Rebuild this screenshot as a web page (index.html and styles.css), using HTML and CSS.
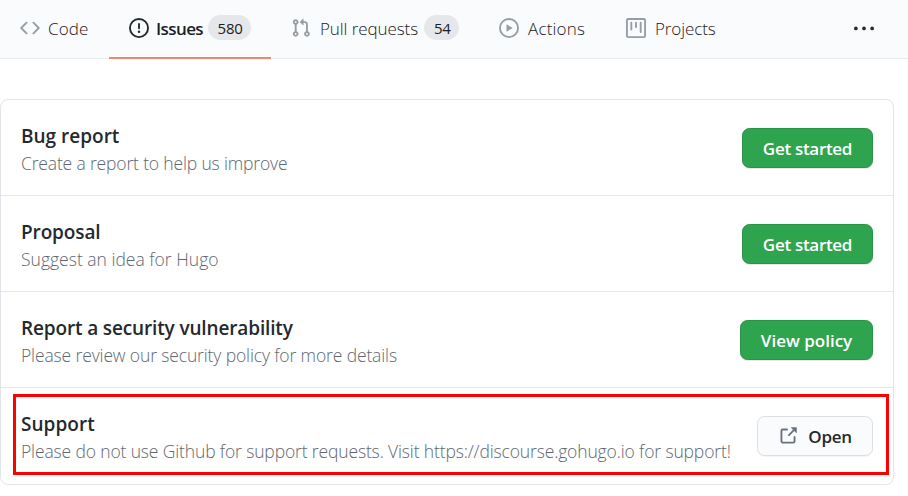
FILE: index.html
```html
<!DOCTYPE html>
<html lang="en">
<head>
<meta charset="utf-8">
<title>Issues</title>
<link rel="stylesheet" href="styles.css">
</head>
<body>
<nav class="tabs">
  <a class="tab tab-code">
    <svg class="icon" viewBox="0 0 16 16"><path fill-rule="evenodd" d="M4.72 3.22a.75.75 0 011.06 1.06L2.06 8l3.72 3.72a.75.75 0 11-1.06 1.06L.47 8.53a.75.75 0 010-1.06l4.25-4.25zm6.56 0a.75.75 0 10-1.06 1.06L13.94 8l-3.72 3.72a.75.75 0 101.06 1.06l4.25-4.25a.75.75 0 000-1.06l-4.25-4.25z"/></svg>
    <span class="label label-code">Code</span>
  </a>
  <a class="tab tab-issues selected">
    <svg class="icon" viewBox="0 0 16 16"><path fill-rule="evenodd" d="M8 1.5a6.5 6.5 0 100 13 6.5 6.5 0 000-13zM0 8a8 8 0 1116 0A8 8 0 010 8zm9 3a1 1 0 11-2 0 1 1 0 012 0zm-.25-6.25a.75.75 0 00-1.5 0v3.5a.75.75 0 001.5 0v-3.5z"/></svg>
    <span class="label label-issues">Issues</span><span class="counter">580</span>
  </a>
  <a class="tab tab-pulls">
    <svg class="icon" viewBox="0 0 16 16"><path fill-rule="evenodd" d="M7.177 3.073L9.573.677A.25.25 0 0110 .854v4.792a.25.25 0 01-.427.177L7.177 3.427a.25.25 0 010-.354zM3.75 2.5a.75.75 0 100 1.5.75.75 0 000-1.5zm-2.25.75a2.25 2.25 0 113 2.122v5.256a2.251 2.251 0 11-1.5 0V5.372A2.25 2.25 0 011.5 3.25zM11 2.5h-1V4h1a1 1 0 011 1v5.628a2.251 2.251 0 101.5 0V5A2.5 2.5 0 0011 2.5zm1 10.25a.75.75 0 111.5 0 .75.75 0 01-1.5 0zM3.75 12a.75.75 0 100 1.5.75.75 0 000-1.5z"/></svg>
    <span class="label label-pulls">Pull requests</span><span class="counter">54</span>
  </a>
  <a class="tab tab-actions">
    <svg class="icon" viewBox="0 0 16 16"><path fill-rule="evenodd" d="M1.5 8a6.5 6.5 0 1113 0 6.5 6.5 0 01-13 0zM8 0a8 8 0 100 16A8 8 0 008 0zM6.379 5.227A.25.25 0 006 5.442v5.117a.25.25 0 00.379.214l4.264-2.559a.25.25 0 000-.428L6.379 5.227z"/></svg>
    <span class="label label-actions">Actions</span>
  </a>
  <a class="tab tab-projects">
    <svg class="icon" viewBox="0 0 16 16"><path fill-rule="evenodd" d="M1.75 0A1.75 1.75 0 000 1.75v12.5C0 15.216.784 16 1.75 16h12.5A1.75 1.75 0 0016 14.25V1.75A1.75 1.75 0 0014.25 0H1.75zM1.5 1.75a.25.25 0 01.25-.25h12.5a.25.25 0 01.25.25v12.5a.25.25 0 01-.25.25H1.75a.25.25 0 01-.25-.25V1.75zM11.75 3a.75.75 0 00-.75.75v7.5a.75.75 0 001.5 0v-7.5a.75.75 0 00-.75-.75zm-8.25.75a.75.75 0 011.5 0v5.5a.75.75 0 01-1.5 0v-5.5zM8 3a.75.75 0 00-.75.75v3.5a.75.75 0 001.5 0v-3.5A.75.75 0 008 3z"/></svg>
    <span class="label label-projects">Projects</span>
  </a>
  <a class="more">
    <svg class="icon" viewBox="0 0 16 16"><path d="M8 9a1.5 1.5 0 100-3 1.5 1.5 0 000 3zM1.5 9a1.5 1.5 0 100-3 1.5 1.5 0 000 3zm13 0a1.5 1.5 0 100-3 1.5 1.5 0 000 3z"/></svg>
  </a>
</nav>
<main class="card">
  <section class="row">
    <div class="text"><h3 class="title t-bug">Bug report</h3><p class="desc d-bug">Create a report to help us improve</p></div>
    <a class="btn primary"><span class="btn-label">Get started</span></a>
  </section>
  <section class="row">
    <div class="text"><h3 class="title t-proposal">Proposal</h3><p class="desc d-proposal">Suggest an idea for Hugo</p></div>
    <a class="btn primary"><span class="btn-label">Get started</span></a>
  </section>
  <section class="row">
    <div class="text"><h3 class="title t-security">Report a security vulnerability</h3><p class="desc d-security">Please review our security policy for more details</p></div>
    <a class="btn primary policy"><span class="btn-label">View policy</span></a>
  </section>
  <section class="row support">
    <div class="text"><h3 class="title t-support">Support</h3><p class="desc d-support">Please do not use Github for support requests. Visit https://discourse.gohugo.io for support!</p></div>
    <a class="btn open"><svg class="icon" viewBox="0 0 16 16"><path fill-rule="evenodd" d="M10.604 1h4.146a.25.25 0 01.25.25v4.146a.25.25 0 01-.427.177L13.03 4.03 9.28 7.78a.75.75 0 01-1.06-1.06l3.75-3.75-1.543-1.543A.25.25 0 0110.604 1zM3.75 2A1.75 1.75 0 002 3.75v8.5c0 .966.784 1.75 1.75 1.75h8.5A1.75 1.75 0 0014 12.25v-3.5a.75.75 0 00-1.5 0v3.5a.25.25 0 01-.25.25h-8.5a.25.25 0 01-.25-.25v-8.5a.25.25 0 01.25-.25h3.5a.75.75 0 000-1.5h-3.5z"/></svg><span class="btn-label">Open</span></a>
    <div class="highlight"></div>
  </section>
</main>
</body>
</html>
```

FILE: styles.css
```css
* { box-sizing: border-box; }
body {
  margin: 0;
  background: #fff;
  color: #24292e;
  font: 17px/26px "Open Sans", "Noto Sans", sans-serif;
  letter-spacing: -0.4px;
  white-space: nowrap;
  overflow: hidden;
}
.icon { width: 20px; height: 20px; flex: none; fill: #959da5; }
.tabs {
  display: flex;
  height: 59px;
  background: #fafbfc;
  border-bottom: 1px solid #e9ebee;
}
.tab {
  display: flex;
  align-items: center;
  height: 59px;
  padding: 0 20px 2px;
  border-bottom: 2px solid transparent;
  color: #1b2025;
  font-weight: 350;
}
.tab .icon { margin-right: 8px; }
.label { padding-top: 2px; }
.label-code { letter-spacing: 0.1px; }
.label-issues { letter-spacing: -0.6px; }
.label-pulls { margin-left: 1px; letter-spacing: -0.08px; }
.label-actions { margin-left: 1px; letter-spacing: 0.2px; }
.label-projects { margin-left: 1px; letter-spacing: -0.1px; }
.tab-code { width: 109px; }
.tab-issues { width: 162px; }
.tab-pulls { width: 208px; }
.tab-actions { width: 127px; }
.tab-projects { width: 130px; }
.selected { border-color: #f9826c; font-weight: 600; }
.selected .icon { margin-right: 7px; fill: #24292e; }
.counter {
  height: 25px;
  margin-left: auto;
  padding: 0 8.5px 0 9.5px;
  border-radius: 13px;
  background: #e6e7eb;
  font-size: 15px;
  font-weight: 500;
  line-height: 26px;
  letter-spacing: -0.3px;
}
.selected .counter { width: 43px; letter-spacing: -0.2px; }
.more { display: flex; align-items: center; margin-left: auto; padding: 0 34px 1px 0; }
.more .icon { fill: #24292e; }
.card {
  width: 894px;
  height: 386px;
  margin-top: 40px;
  border: 1px solid #e1e4e8;
  border-radius: 8px;
}
.row {
  display: flex;
  justify-content: space-between;
  align-items: center;
  height: 96px;
  padding: 0 20px;
  border-bottom: 1px solid #e5e8eb;
}
.text { padding-top: 3px; }
.title { margin: 0; font-size: 19px; font-weight: 600; line-height: 27px; }
.t-bug { letter-spacing: 0; }
.t-proposal { letter-spacing: -0.12px; }
.t-security { letter-spacing: -0.14px; }
.t-support { letter-spacing: 0.05px; }
.desc { margin: 0; color: #5e6771; font-size: 17.5px; font-weight: 350; }
.d-bug { letter-spacing: -0.16px; }
.d-proposal { letter-spacing: 0.01px; }
.d-security { letter-spacing: -0.13px; }
.d-support { letter-spacing: -0.14px; }
.btn {
  display: flex;
  align-items: center;
  justify-content: center;
  width: 131px;
  height: 40px;
  flex: none;
  border: 1px solid #2b9348;
  border-radius: 7.5px;
  font-weight: 600;
  letter-spacing: -0.3px;
  box-shadow: 0 1px 0 rgba(27, 31, 35, .1);
}
.btn-label { padding-top: 2px; }
.primary { background: #2ea44f; color: #fff; }
.policy { width: 133px; letter-spacing: 0; }
.open { width: 116px; background: #fafbfc; border-color: #dcdee0; box-shadow: 0 1px 0 rgba(27, 31, 35, .04); }
.open .icon { margin-right: 10px; fill: #6a737d; }
.support { position: relative; border-bottom: 0; }
.highlight {
  position: absolute;
  left: 12px;
  top: 6px;
  width: 876px;
  height: 81px;
  border: 3px solid #f00;
}
```
